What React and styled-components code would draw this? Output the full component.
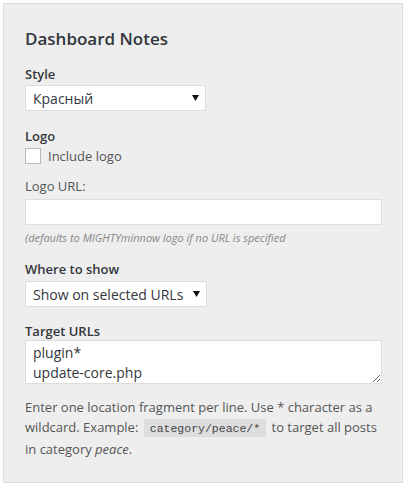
import React from "react";
import styled, { createGlobalStyle } from "styled-components";

const GlobalStyle = createGlobalStyle`
  body {
    margin: 0;
    background: #fff;
    font-family: "Open Sans", "Liberation Sans", sans-serif;
    color: #444;
  }
`;

const Panel = styled.div`
  margin: 3px;
  width: 400px;
  box-sizing: border-box;
  background: #eeeeee;
  border: 1px solid #dcdcdc;
  padding: 23px 20px 23px 21px;
`;

const Title = styled.h3`
  margin: 0 0 14px;
  font-size: 17px;
  line-height: 24px;
  font-weight: 600;
  color: #32373c;
`;

const Field = styled.div`
  display: flex;
  flex-direction: column;
  align-items: flex-start;
  margin-top: ${(p) => p.gap || 0}px;
`;

const Label = styled.label`
  font-size: 13px;
  line-height: 18px;
  font-weight: ${(p) => (p.light ? 400 : 600)};
  color: ${(p) => (p.light ? "#555" : "#32373c")};
  margin-bottom: ${(p) => p.space || 0}px;
`;

const SelectWrap = styled.div`
  position: relative;
  width: ${(p) => p.width}px;
`;

const Select = styled.select`
  appearance: none;
  width: 100%;
  height: 26px;
  box-sizing: border-box;
  margin: 0;
  padding: 0 20px 0 7px;
  border: 1px solid #ddd;
  border-radius: 0;
  background: #fff;
  font-family: "Open Sans", "Liberation Sans", sans-serif;
  font-size: 14px;
  color: #32373c;
  outline: none;
`;

const Arrow = styled.svg`
  position: absolute;
  right: 7px;
  top: 10px;
  pointer-events: none;
`;

const CheckRow = styled.label`
  display: flex;
  align-items: center;
  gap: 7px;
  font-size: 13px;
  line-height: 16px;
  color: #555;
`;

const Checkbox = styled.input`
  appearance: none;
  margin: 0;
  width: 16px;
  height: 16px;
  box-sizing: border-box;
  background: #fff;
  border: 1px solid #b4b9be;
`;

const TextInput = styled.input`
  width: 100%;
  height: 26px;
  box-sizing: border-box;
  margin: 0;
  border: 1px solid #ddd;
  background: #fff;
  padding: 0 7px;
  font-family: inherit;
  font-size: 14px;
  outline: none;
`;

const Help = styled.em`
  display: block;
  margin-top: 5px;
  font-size: 11px;
  line-height: 16px;
  color: #888;
`;

const TextArea = styled.textarea`
  width: 100%;
  height: 44px;
  box-sizing: border-box;
  margin: 0;
  border: 1px solid #ddd;
  background: #fff;
  padding: 2px 7px 0;
  font-family: "Open Sans", "Liberation Sans", sans-serif;
  font-size: 14px;
  line-height: 20px;
  color: #32373c;
  resize: vertical;
  outline: none;
`;

const Note = styled.p`
  margin: 13px 0 0;
  font-size: 13px;
  line-height: 20px;
  color: #555;
`;

const Code = styled.code`
  font-family: Consolas, "Liberation Mono", monospace;
  font-size: 11.5px;
  background: #dedede;
  padding: 3px 6px 2px;
  margin: 0 2px;
  color: #444;
`;

const SelectField = ({ width, value, options }) => (
  <SelectWrap width={width}>
    <Select defaultValue={value}>
      {options.map((o) => (
        <option key={o}>{o}</option>
      ))}
    </Select>
    <Arrow width="7" height="6" viewBox="0 0 7 6">
      <path d="M0 0H7L3.5 6Z" fill="#111" />
    </Arrow>
  </SelectWrap>
);

export default function App() {
  return (
    <>
      <GlobalStyle />
      <Panel>
        <Title>Dashboard Notes</Title>

        <Field>
          <Label space={2}>Style</Label>
          <SelectField width={181} value="Красный" options={["Красный", "Синий", "Зелёный"]} />
        </Field>

        <Field gap={16}>
          <Label space={3}>Logo</Label>
          <CheckRow>
            <Checkbox type="checkbox" />
            Include logo
          </CheckRow>
        </Field>

        <Field gap={13}>
          <Label light space={4}>Logo URL:</Label>
          <TextInput type="text" />
          <Help>(defaults to MIGHTYminnow logo if no URL is specified</Help>
        </Field>

        <Field gap={14}>
          <Label space={3}>Where to show</Label>
          <SelectField
            width={182}
            value="Show on selected URLs"
            options={["Show everywhere", "Show on selected URLs"]}
          />
        </Field>

        <Field gap={15}>
          <Label>Target URLs</Label>
          <TextArea defaultValue={"plugin*\nupdate-core.php"} />
        </Field>

        <Note>
          Enter one location fragment per line. Use * character as a wildcard. Example:{" "}
          <Code>category/peace/*</Code> to target all posts in category <em>peace</em>.
        </Note>
      </Panel>
    </>
  );
}
